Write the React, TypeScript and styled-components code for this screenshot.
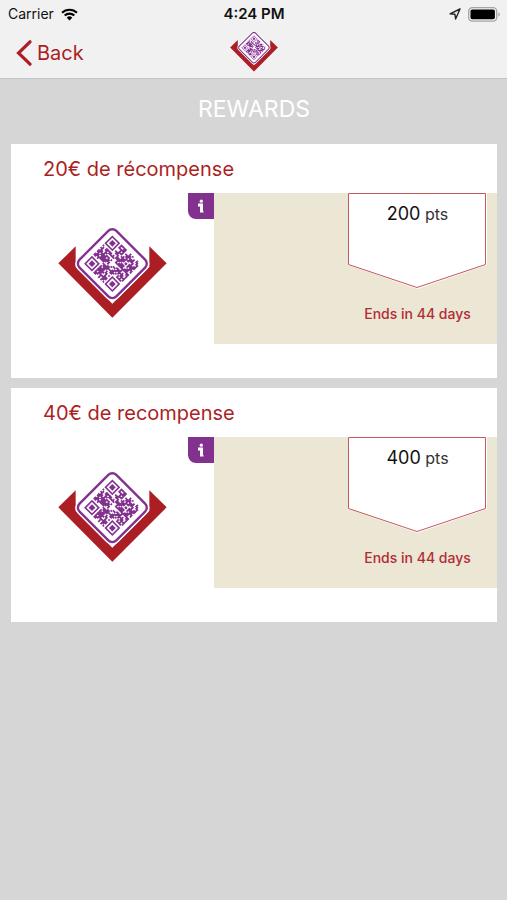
import React from "react";
import styled, { createGlobalStyle } from "styled-components";

const RED = "#ab1f24";
const PURPLE = "#83318f";

const GlobalStyle = createGlobalStyle`
  * { box-sizing: border-box; }
  body {
    margin: 0;
    background: #d6d6d6;
    font-family: Inter, "Liberation Sans", sans-serif;
    color: #111;
  }
`;

const Header = styled.header`
  background: #f1f1f1;
  border-bottom: 1px solid #c4c4c4;
`;

const StatusBar = styled.div`
  display: grid;
  grid-template-columns: 1fr auto 1fr;
  align-items: center;
  height: 28px;
  padding: 0 7px 0 8px;
  font-size: 14px;
  line-height: 20px;
`;

const StatusGroup = styled.div<{ $end?: boolean }>`
  display: flex;
  align-items: center;
  gap: 7px;
  justify-content: ${(p) => (p.$end ? "flex-end" : "flex-start")};
`;

const Clock = styled.time`
  font-size: 15px;
  font-weight: 600;
`;

const NavBar = styled.nav`
  display: grid;
  grid-template-columns: 1fr auto 1fr;
  height: 50px;
  padding: 0 16px;
`;

const BackButton = styled.button`
  display: flex;
  align-items: center;
  justify-self: start;
  gap: 5px;
  height: 50px;
  padding: 0;
  border: 0;
  background: none;
  color: ${RED};
  font: inherit;
  font-size: 20px;
  cursor: pointer;
`;

const LogoSvg = styled.svg<{ $width: number }>`
  display: block;
  width: ${(p) => p.$width}px;
  height: auto;
`;

const NavLogo = styled.div`
  padding-top: 4px;
`;

const Main = styled.main`
  padding: 0 10px 10px 11px;
`;

const Heading = styled.h1`
  margin: 0;
  padding: 14px 0 18px;
  color: #fff;
  font-size: 23px;
  line-height: 33px;
  font-weight: 400;
  text-align: center;
`;

const RewardList = styled.ul`
  display: flex;
  flex-direction: column;
  gap: 10px;
  margin: 0;
  padding: 0;
  list-style: none;
`;

const Card = styled.li`
  padding-bottom: 34px;
  background: #fff;
`;

const CardTitle = styled.h2`
  margin: 0;
  padding: 11px 32px 10px;
  color: ${RED};
  font-size: 20px;
  line-height: 28px;
  font-weight: 400;
`;

const CardBody = styled.div`
  display: grid;
  grid-template-columns: 203px 1fr;
  min-height: 151px;
`;

const Picture = styled.div`
  position: relative;
  display: flex;
  align-items: flex-start;
  justify-content: center;
  padding-top: 35px;
`;

const InfoButton = styled.button`
  position: absolute;
  top: 0;
  right: 0;
  display: flex;
  align-items: center;
  justify-content: center;
  width: 26px;
  height: 26px;
  padding: 0;
  border: 0;
  border-bottom-left-radius: 8px;
  background: ${PURPLE};
  cursor: pointer;
`;

const Details = styled.div`
  display: flex;
  flex-direction: column;
  align-items: flex-end;
  padding-right: 10px;
  background: #ece6d4;
`;

const Ribbon = styled.div`
  display: grid;
  width: 139px;
  height: 96px;

  > * {
    grid-area: 1 / 1;
  }
`;

const Points = styled.p`
  margin: 0;
  padding-top: 9px;
  color: #333;
  font-size: 16px;
  line-height: 24px;
  text-align: center;
`;

const Amount = styled.strong`
  color: #111;
  font-size: 18px;
  font-weight: 400;
`;

const Ends = styled.p`
  width: 139px;
  margin: 15px 0 0;
  color: #b12c35;
  font-size: 14px;
  line-height: 20px;
  font-weight: 500;
  text-align: center;
`;

const SIZE = 25;
const FINDERS = [
  [0, 0],
  [SIZE - 7, 0],
  [0, SIZE - 7],
];

function codePath(): string {
  let seed = 73;
  let d = "";
  for (let y = 0; y < SIZE; y++) {
    for (let x = 0; x < SIZE; x++) {
      seed = (seed * 1103515245 + 12345) % 2147483648;
      const inFinder = FINDERS.some(
        ([fx, fy]) => x >= fx - 1 && x <= fx + 7 && y >= fy - 1 && y <= fy + 7,
      );
      const inCentre = Math.abs(x - 12) + Math.abs(y - 12) < 3;
      const inMark = Math.abs(x - 18) < 2 && Math.abs(y - 18) < 2;
      if (!inFinder && !inCentre && !inMark && seed / 2147483648 < 0.62) {
        d += `M${x} ${y}h1.1v1.1h-1.1z`;
      }
    }
  }
  return d;
}

const CODE = codePath();

function Logo({ width }: { width: number }) {
  return (
    <LogoSvg $width={width} viewBox="24 25 327 270" role="img" aria-label="Logo">
      <path
        d="M25 131 77 80V141L187 252 298 141V80L350 131 187 294Z"
        fill={RED}
      />
      <g transform="translate(187 132) rotate(-45)">
        <rect x="-86" y="-86" width="172" height="172" rx="25" fill="#fff" />
        <rect
          x="-78"
          y="-78"
          width="156"
          height="156"
          rx="17"
          fill="#fff"
          stroke={PURPLE}
          strokeWidth="7"
        />
        <g transform="scale(4.8) translate(-12.5 -12.5)" fill={PURPLE}>
          <path d={CODE} />
          {FINDERS.map(([x, y]) => (
            <g key={`${x}-${y}`}>
              <rect
                x={x + 0.5}
                y={y + 0.5}
                width="6"
                height="6"
                fill="none"
                stroke={PURPLE}
              />
              <rect x={x + 2} y={y + 2} width="3" height="3" />
            </g>
          ))}
          <circle cx="18.5" cy="18.5" r="0.9" />
        </g>
      </g>
    </LogoSvg>
  );
}

function WifiIcon() {
  return (
    <svg width="17" height="13" viewBox="0 0 17 13" aria-hidden="true">
      <g fill="none" stroke="#000" strokeWidth="2.1">
        <path d="M1 4.8a10.6 10.6 0 0 1 15 0" />
        <path d="M3.7 7.6a6.8 6.8 0 0 1 9.6 0" />
      </g>
      <path d="M8.5 12.6 5.7 9.7a4 4 0 0 1 5.600 0Z" />
    </svg>
  );
}

function LocationIcon() {
  return (
    <svg width="12" height="12" viewBox="0 0 12 12" aria-hidden="true">
      <path
        d="M11 1 1 5.8 5.900 6.200 6.600 11Z"
        fill="none"
        stroke="#222"
        strokeWidth="1.4"
        strokeLinejoin="round"
      />
    </svg>
  );
}

function BatteryIcon() {
  return (
    <svg width="32" height="15" viewBox="0 0 32 15" aria-hidden="true">
      <rect x="0.7" y="0.7" width="28" height="13.4" rx="3.6" fill="none" stroke="#a5a5a5" strokeWidth="1.3" />
      <rect x="2.5" y="2.5" width="24.4" height="9.8" rx="1.8" />
      <path d="M30.3 5.200q3 2.200 0 4.600z" fill="#a5a5a5" />
    </svg>
  );
}

interface Reward {
  title: string;
  points: number;
  days: number;
}

const rewards: Reward[] = [
  { title: "20€ de récompense", points: 200, days: 44 },
  { title: "40€ de recompense", points: 400, days: 44 },
];

function RewardCard({ title, points, days }: Reward) {
  return (
    <Card>
      <CardTitle>{title}</CardTitle>
      <CardBody>
        <Picture>
          <Logo width={109} />
          <InfoButton aria-label={`About ${title}`}>
            <svg width="8" height="14" viewBox="0 0 8 14" aria-hidden="true">
              <circle cx="4.300" cy="2.200" r="1.600" fill="#fff" />
              <path d="M1 4.500h5V12.200H6.600V13.500H3V7.500H1z" fill="#fff" />
            </svg>
          </InfoButton>
        </Picture>
        <Details>
          <Ribbon>
            <svg width="139" height="96" viewBox="0 0 139 96" aria-hidden="true">
              <path d="M0 0H139V72L69.500 96 0 72Z" fill="#fff" />
              <path
                d="M0.500 0.500H137.500V71.500L69 94.500 0.500 71.500Z"
                fill="#fff"
                stroke="#c4575c"
              />
            </svg>
            <Points>
              <Amount>{points}</Amount> pts
            </Points>
          </Ribbon>
          <Ends>Ends in {days} days</Ends>
        </Details>
      </CardBody>
    </Card>
  );
}

export default function App() {
  return (
    <>
      <GlobalStyle />
      <Header>
        <StatusBar>
          <StatusGroup>
            Carrier
            <WifiIcon />
          </StatusGroup>
          <Clock>4:24 PM</Clock>
          <StatusGroup $end>
            <LocationIcon />
            <BatteryIcon />
          </StatusGroup>
        </StatusBar>
        <NavBar>
          <BackButton>
            <svg width="16" height="26" viewBox="0 0 16 26" aria-hidden="true">
              <path d="M14 1.800 2.500 13 14 24.200" fill="none" stroke={RED} strokeWidth="3.200" strokeLinecap="round" />
            </svg>
            Back
          </BackButton>
          <NavLogo>
            <Logo width={48} />
          </NavLogo>
        </NavBar>
      </Header>
      <Main>
        <Heading>REWARDS</Heading>
        <RewardList>
          {rewards.map((reward) => (
            <RewardCard key={reward.title} {...reward} />
          ))}
        </RewardList>
      </Main>
    </>
  );
}
